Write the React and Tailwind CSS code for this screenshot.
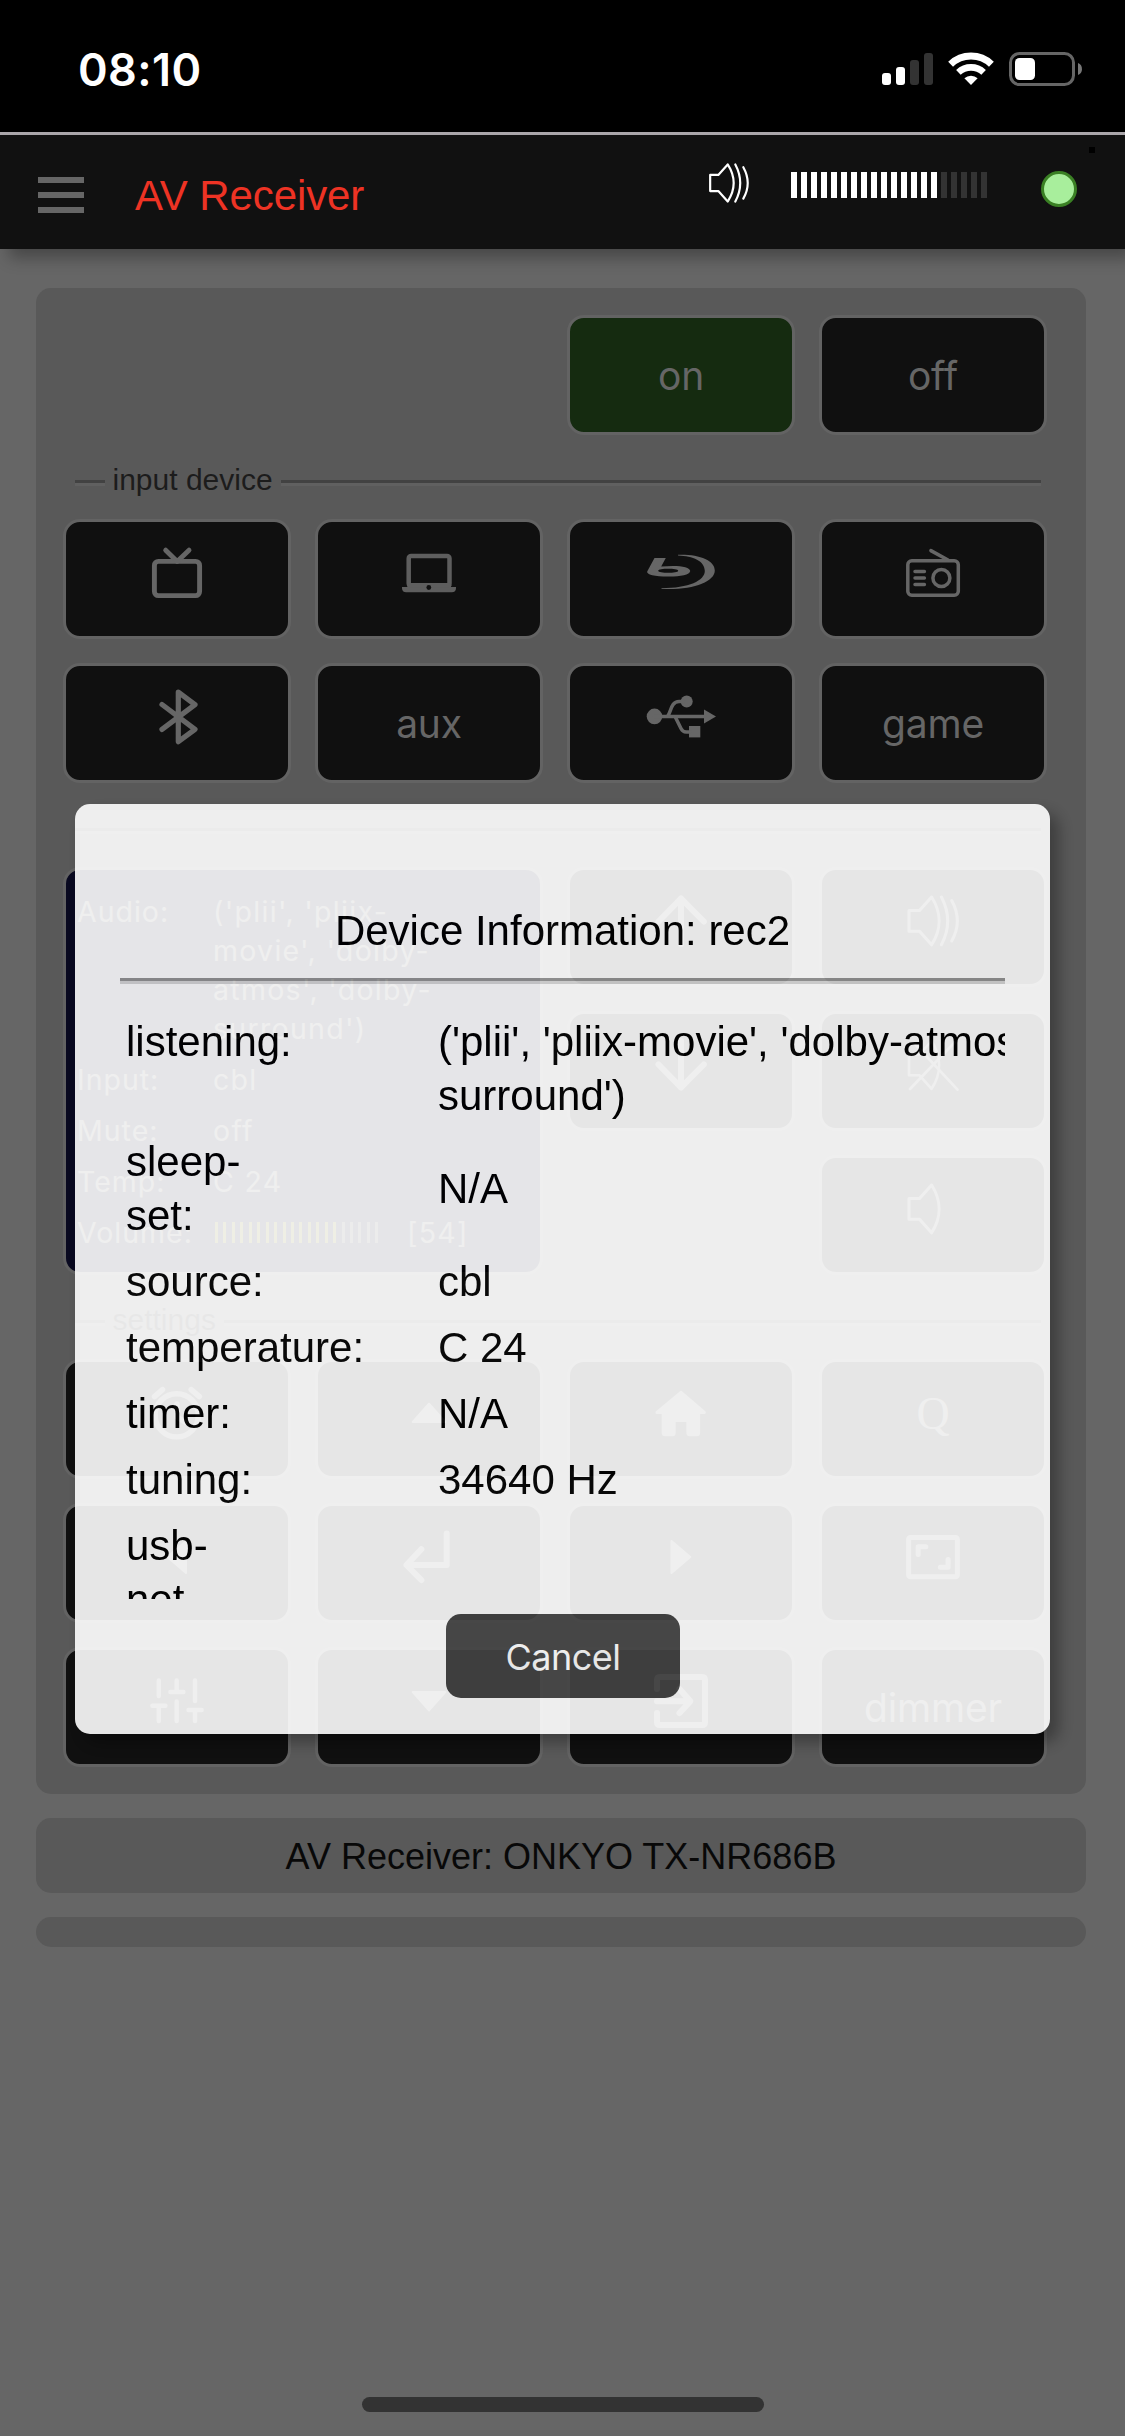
import React from "react";

const CONE = "M112.6 30 L100.5 43.5 H90 V64.3 H100.5 L112.6 77.8 C122.5 62.5 122.5 45.5 112.6 30 Z";

function Glyph({ children, width = 4.9 }) {
  return (
    <svg
      viewBox="3 3 222 114"
      className="block h-full w-full"
      fill="none"
      stroke="#666666"
      strokeWidth={width}
      strokeLinecap="round"
      strokeLinejoin="round"
    >
      {children}
    </svg>
  );
}

const icons = {
  tv: (
    <Glyph>
      <rect x="91.4" y="42.4" width="45.2" height="34.2" rx="4" />
      <path d="M102.7 31.2 L114.2 42.5 L126 31.2" />
    </Glyph>
  ),
  laptop: (
    <Glyph>
      <g stroke="#5e5e5e">
        <rect x="93.7" y="36.9" width="40.8" height="30" rx="2.5" strokeWidth="4.5" />
        <path d="M87 68 H141 V69 Q141 73.2 136.8 73.2 H91.2 Q87 73.2 87 69 Z" fill="#5e5e5e" stroke="none" />
        <path d="M94.5 66.4 H134" />
      </g>
      <circle cx="113.8" cy="68.5" r="2.4" fill="#101010" stroke="none" />
    </Glyph>
  ),
  bluray: (
    <Glyph>
      <g fill="#666666" stroke="none">
        <path d="M111 35.7 C132 35 147.8 41 147.8 51.5 C147.8 63 125 71.5 94.5 69.9 V69.2 C122 69.2 137.8 61.5 137.8 52 C137.8 42 126 37 111 36.5 Z" />
        <path
          fillRule="evenodd"
          d="M87.5 38.9 H98.8 L94.2 47.6 C110 45.8 123.2 47.6 123.2 52 C123.2 56 112 57.8 101 57.6 C88 57.4 79 55.4 80.2 52.4 Z M91.2 51.8 C91.2 54.5 111.2 54.5 111.2 51.8 C111.2 49.2 91.2 49.2 91.2 51.8 Z"
        />
      </g>
    </Glyph>
  ),
  radio: (
    <Glyph width={3.5}>
      <rect x="88.8" y="41.7" width="50.5" height="34.6" rx="4" />
      <path d="M111.9 31.6 L129 41" />
      <path d="M96 52.4 H105.4 M96 58.9 H105.4 M96 65.6 H105.4" />
      <circle cx="122.4" cy="58.9" r="8.5" />
    </Glyph>
  ),
  bluetooth: (
    <Glyph width={5.2}>
      <path d="M99 41.5 L132 66.3 L115.3 78.7 V29.2 L132 41.6 L99 66.4" />
    </Glyph>
  ),
  usb: (
    <Glyph width={3.5}>
      <g fill="#666666">
        <circle cx="87.5" cy="53.4" r="7.8" stroke="none" />
        <circle cx="119.7" cy="38.4" r="6" stroke="none" />
        <path d="M137 46.4 L149 53.4 L137 60.4 Z" stroke="none" />
        <rect x="122" y="63" width="11.3" height="11.4" stroke="none" />
      </g>
      <path d="M87 53.4 H138" />
      <path d="M101 52.8 C104 48 104.5 38.4 112 38.4 H117" />
      <path d="M108.3 54 L114 65.5 Q115.8 69 119 69 H123" />
    </Glyph>
  ),
  up: (
    <Glyph width={6}>
      <path d="M114 77 V31.5 M91.5 54.5 L114 31.5 L136.8 54.5" />
    </Glyph>
  ),
  down: (
    <Glyph width={6}>
      <path d="M114 30 V76.5 M91.5 53.5 L114 76.5 L136.8 53.5" />
    </Glyph>
  ),
  loud: (
    <Glyph width={3}>
      <path d={CONE} />
      <path d="M122.4 30 Q135 54 122.4 77.8 M132.7 33.5 Q144 54 132.7 74" />
    </Glyph>
  ),
  mute: (
    <Glyph width={2.6}>
      <path d={CONE} />
      <path d="M91 78 L135.5 31.5 M138.5 78.7 L95 32" />
    </Glyph>
  ),
  quiet: (
    <Glyph width={3}>
      <path d={CONE} />
    </Glyph>
  ),
  alarm: (
    <Glyph width={5.4}>
      <circle cx="113.7" cy="56.3" r="21.6" />
      <path d="M91.5 37.6 L99.5 30.6 M128.2 30.6 L136.4 37.6" />
      <path d="M114 45 V58 L122 63" />
    </Glyph>
  ),
  triUp: (
    <Glyph width={2}>
      <path d="M114 44.7 L130.3 63 H97.8 Z" fill="#666666" />
    </Glyph>
  ),
  triDown: (
    <Glyph width={2}>
      <path d="M114 63.4 L130.3 45 H97.8 Z" fill="#666666" />
    </Glyph>
  ),
  triLeft: (
    <Glyph width={2}>
      <path d="M104.5 54 L123 38 V70 Z" fill="#666666" />
    </Glyph>
  ),
  triRight: (
    <Glyph width={2}>
      <path d="M123.2 54 L104.5 38 V70 Z" fill="#666666" />
    </Glyph>
  ),
  home: (
    <Glyph width={3}>
      <path
        d="M114 33.4 L137.3 53.4 H131.6 V73.8 Q131.6 75.8 129.6 75.8 H122.9 Q120.9 75.8 120.9 73.8 V61.5 H107.2 V73.8 Q107.2 75.8 105.2 75.8 H98.2 Q96.2 75.8 96.2 73.8 V53.4 H90 Z"
        fill="#666666"
      />
    </Glyph>
  ),
  enter: (
    <Glyph width={6}>
      <path d="M131.7 30.5 V62 H92 M106.3 46.3 L91.5 62 L106.3 77" />
    </Glyph>
  ),
  aspect: (
    <Glyph width={5}>
      <rect x="89.6" y="34.5" width="48.8" height="39.2" rx="2" />
      <path d="M99.2 51.5 V43.7 H106.8 M129.1 56.5 V64.2 H121.4" />
    </Glyph>
  ),
  sliders: (
    <Glyph width={4.4}>
      <path d="M95.8 33.5 V49 M89.4 58.7 H102.4 M95.8 58.7 V74" />
      <path d="M113.7 33.5 V45 M107.4 45 H120.4 M113.7 54.5 V74" />
      <path d="M132 33.5 V54 M125.5 63 H138.6 M132 63 V74" />
    </Glyph>
  ),
  exit: (
    <Glyph width={6}>
      <path d="M90 42 V33 Q90 30 93 30 H135 Q138 30 138 33 V75 Q138 78 135 78 H93 Q90 78 90 75 V66" />
      <path d="M90 54.3 H122 M112.5 42 L123.4 54.3 L112.5 66" />
    </Glyph>
  ),
};

function Key({ icon, label, active }) {
  return (
    <button
      className={
        "flex h-[120px] w-[228px] items-center justify-center rounded-[17px] border-[3px] border-[#636363] font-['Inter',sans-serif] text-[39px] leading-[48px] tracking-[-0.2px] text-[#666666] " +
        (active ? "bg-[#152b10]" : "bg-[#101010]")
      }
    >
      {icon ? icons[icon] : <span className="pt-0.5">{label}</span>}
    </button>
  );
}

function Rule({ label }) {
  return (
    <div className="mr-1.5 ml-3 flex h-9 items-center pr-3">
      <div className={"h-1.5 border-t-[3px] border-b-[3px] border-t-[#424242] border-b-[#606060] " + (label ? "w-[30px]" : "w-full")} />
      {label && (
        <>
          <span className="mb-1.5 pr-2 pl-[7.5px] font-['Liberation_Sans',Arial,sans-serif] text-[30px] leading-9 whitespace-nowrap text-[#1c1c1c]">{label}</span>
          <div className="h-1.5 grow border-t-[3px] border-b-[3px] border-t-[#424242] border-b-[#606060]" />
        </>
      )}
    </div>
  );
}

const levels = Array.from({ length: 20 }, (_, i) => i < 15);

function StatusBar() {
  return (
    <div className="flex h-[132px] items-start bg-black">
      <span className="mt-[42px] ml-[78px] w-[804px] font-['Inter',sans-serif] text-[45px] leading-[55px] font-semibold tracking-[0.4px] text-white">08:10</span>
      <div className="mt-[53px] flex h-8 w-[51px] items-end gap-[5px]">
        <i className="h-3 w-[9px] rounded-[3px] bg-white" />
        <i className="h-[18px] w-[9px] rounded-[3px] bg-white" />
        <i className="h-[25px] w-[9px] rounded-[3px] bg-[#333333]" />
        <i className="h-8 w-[9px] rounded-[3px] bg-[#333333]" />
      </div>
      <svg viewBox="0 0 46 34" className="mt-[52px] ml-[15px] h-[34px] w-[46px]" fill="none" stroke="white">
        <path d="M2.6 12.2 A29.5 29.5 0 0 1 43.4 12.2" strokeWidth="7" />
        <path d="M10.4 20.4 A18.3 18.3 0 0 1 35.6 20.4" strokeWidth="6.6" />
        <path d="M16.4 26.3 A9.5 9.5 0 0 1 29.6 26.3 L23 33 Z" fill="white" stroke="none" />
      </svg>
      <svg viewBox="0 0 74 34" className="mt-[52px] ml-[15px] h-[34px] w-[74px]">
        <rect x="1.5" y="1.5" width="63" height="31" rx="9" fill="none" stroke="#666666" strokeWidth="3" />
        <rect x="6" y="6" width="20" height="22" rx="4.5" fill="white" />
        <path d="M69 11 C74.3 12.5 74.3 21.5 69 23 Z" fill="#777777" />
      </svg>
    </div>
  );
}

function TopBar() {
  return (
    <header className="relative flex h-[117px] items-start border-t-[3px] border-[#aaa6aa] bg-[#111111] shadow-[9px_9px_15px_rgba(0,0,0,0.3)]">
      <div className="mt-[42px] ml-[38px] flex h-9 w-[46px] flex-col justify-between">
        <i className="h-1.5 bg-[#666666]" />
        <i className="h-1.5 bg-[#666666]" />
        <i className="h-1.5 bg-[#666666]" />
      </div>
      <h1 className="mt-[34px] ml-[51px] w-[574px] font-['Liberation_Sans',Arial,sans-serif] text-[42px] leading-[54px] tracking-[-0.1px] text-[#ee3324]">AV Receiver</h1>
      <svg
        viewBox="88.5 28.3 51.5 51.2"
        className="mt-7 h-10 w-10"
        fill="none"
        stroke="white"
        strokeWidth="2.8"
        strokeLinecap="round"
        strokeLinejoin="round"
      >
        <path d={CONE} />
        <path d="M122.4 30 Q135 54 122.4 77.8 M132.7 33.5 Q144 54 132.7 74" />
      </svg>
      <div className="mt-[37px] ml-[42px] flex gap-1">
        {levels.map((on, i) => (
          <i key={i} className={"h-[26px] w-1.5 " + (on ? "bg-white" : "bg-[#333333]")} />
        ))}
      </div>
      <i className="mt-9 ml-[54px] h-9 w-9 rounded-full border-[3px] border-[#3a8024] bg-[#a8ee9c]" />
      <i className="mt-3 ml-3 h-1.5 w-1.5 bg-black" />
    </header>
  );
}

function Display() {
  const line = "flex leading-[39px]";
  const name = "w-[136px] shrink-0 tracking-[1px]";
  return (
    <div className="col-span-2 row-span-3 flex flex-col gap-3 rounded-[17px] border-[3px] border-[#636363] bg-[#090920] pt-[22px] pl-[11px] font-['Inter',sans-serif] text-[28.5px] tracking-[1.3px] text-[#666666]">
      <div className={line}>
        <span className={name}>Audio:</span>
        <span>
          ('plii', 'pliix-
          <br />
          movie', 'dolby-
          <br />
          atmos', 'dolby-
          <br />
          surround')
        </span>
      </div>
      <div className={line}>
        <span className={name}>Input:</span>
        <span>cbl</span>
      </div>
      <div className={line}>
        <span className={name}>Mute:</span>
        <span>off</span>
      </div>
      <div className={line}>
        <span className={name}>Temp:</span>
        <span>C 24</span>
      </div>
      <div className={line}>
        <span className={name}>Volume:</span>
        <span className="mt-[9px] ml-0.5 flex w-[192px] gap-[5.45px]">
          {levels.map((on, i) => (
            <i key={i} className={"h-[21px] w-[3px] " + (on ? "bg-[#666600]" : "bg-[#444444]")} />
          ))}
        </span>
        <span>[54]</span>
      </div>
    </div>
  );
}

const grid = "grid grid-cols-[repeat(4,228px)] gap-6";

function Remote() {
  return (
    <section className="h-[1506px] rounded-[15px] bg-[#595959] px-[27px] pt-[27px]">
      <div className="flex justify-end gap-6 pr-3">
        <Key label="on" active />
        <Key label="off" />
      </div>
      <div className="mt-[30px] mb-[18px]">
        <Rule label="input device" />
      </div>
      <div className={grid}>
        <Key icon="tv" />
        <Key icon="laptop" />
        <Key icon="bluray" />
        <Key icon="radio" />
        <Key icon="bluetooth" />
        <Key label="aux" />
        <Key icon="usb" />
        <Key label="game" />
      </div>
      <div className="mt-[30px] mb-[18px]">
        <Rule />
      </div>
      <div className={grid}>
        <Display />
        <Key icon="up" />
        <Key icon="loud" />
        <Key icon="down" />
        <Key icon="mute" />
        <div />
        <Key icon="quiet" />
      </div>
      <div className="mt-[30px] mb-[18px]">
        <Rule label="settings" />
      </div>
      <div className={grid}>
        <Key icon="alarm" />
        <Key icon="triUp" />
        <Key icon="home" />
        <Key label={<span className="block pb-3 font-['Liberation_Serif',serif] text-[46px]">Q</span>} />
        <Key icon="triLeft" />
        <Key icon="enter" />
        <Key icon="triRight" />
        <Key icon="aspect" />
        <Key icon="sliders" />
        <Key icon="triDown" />
        <Key icon="exit" />
        <Key label="dimmer" />
      </div>
    </section>
  );
}

const details = [
  [["listening:"], ["('plii', 'pliix-movie', 'dolby-atmos', 'dolby-", "surround')"]],
  [["sleep-", "set:"], ["N/A"]],
  [["source:"], ["cbl"]],
  [["temperature:"], ["C 24"]],
  [["timer:"], ["N/A"]],
  [["tuning:"], ["34640 Hz"]],
  [["usb-", "net"], []],
];

function Lines({ items, top }) {
  return (
    <div className={"whitespace-nowrap " + (top ? "self-start" : "self-center")}>
      {items.map((text) => (
        <div key={text}>{text}</div>
      ))}
    </div>
  );
}

function InfoDialog() {
  return (
    <div className="absolute top-[804px] left-[75px] flex h-[930px] w-[975px] flex-col rounded-[15px] bg-white px-[45px] font-['Liberation_Sans',Arial,sans-serif] text-[42px] leading-[54px] text-black opacity-90 shadow-[9px_9px_15px_rgba(0,0,0,0.35)]">
      <h2 className="pt-[100px] text-center">Device Information: rec2</h2>
      <div className="mt-5 h-1.5 shrink-0 border-t-[3px] border-b-[3px] border-t-[#949494] border-b-[#d6d6d6]" />
      <div className="grid h-[615px] shrink-0 grid-cols-[312px_1fr] content-start gap-y-3 overflow-hidden pt-[31px] pl-1.5">
        {details.map(([label, value], i) => (
          <React.Fragment key={label[0]}>
            <Lines items={label} top={i === 0} />
            <Lines items={value} />
          </React.Fragment>
        ))}
      </div>
      <button className="mt-[15px] ml-[326px] h-[84px] w-[234px] rounded-[15px] bg-[#444444] pt-0.5 font-['Inter',sans-serif] text-[36px] tracking-[-0.5px] text-white">Cancel</button>
    </div>
  );
}

export default function App() {
  return (
    <div className="relative flex h-[2436px] w-[1125px] flex-col overflow-hidden bg-[#666666]">
      <StatusBar />
      <TopBar />
      <main className="flex flex-col gap-6 px-9 pt-[39px] pr-[39px]">
        <Remote />
        <div className="h-[75px] rounded-[15px] bg-[#595959] text-center font-['Liberation_Sans',Arial,sans-serif] text-[36px] leading-[78px] text-[#080808]">
          AV Receiver: ONKYO TX-NR686B
        </div>
        <div className="h-[30px] rounded-[15px] bg-[#595959]" />
      </main>
      <div className="mx-auto mt-auto mb-6 h-[15px] w-[402px] rounded-full bg-[#333333]" />
      <InfoDialog />
    </div>
  );
}
